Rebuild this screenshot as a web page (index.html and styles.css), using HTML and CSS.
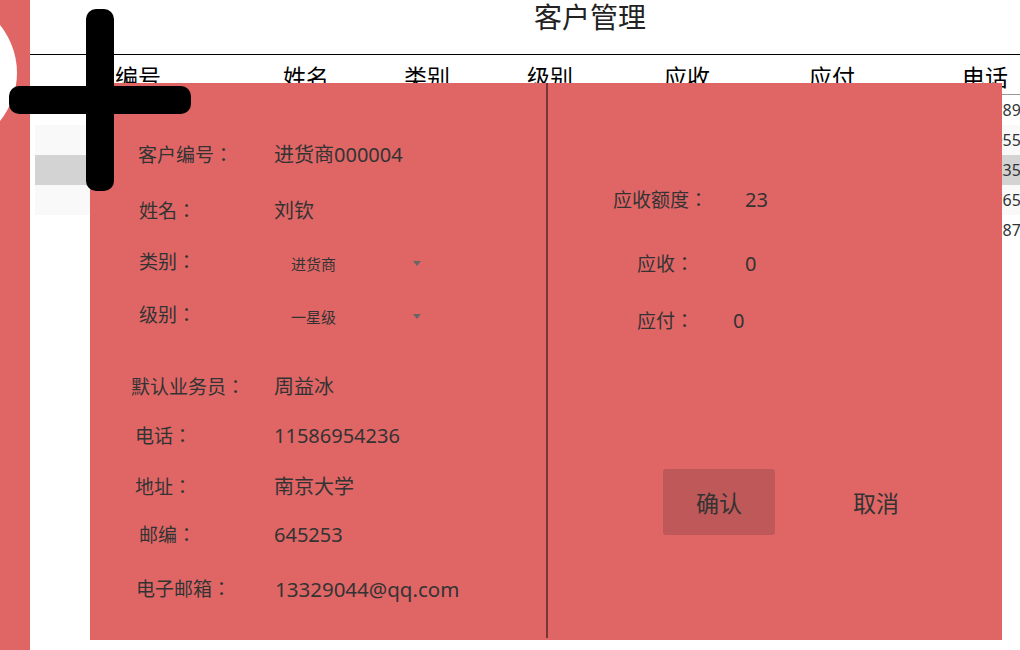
FILE: index.html
```html
<!DOCTYPE html>
<html lang="zh-CN">
<head>
<meta charset="utf-8">
<title>客户管理</title>
<link rel="stylesheet" href="styles.css">
</head>
<body>
<div class="page">
  <aside class="rail"></aside>
  <main class="main">
    <h1 class="title">客户管理</h1>
    <div class="table">
      <div class="thead">
        <span>编号</span><span>姓名</span><span>类别</span><span>级别</span><span>应收</span><span>应付</span><span>电话</span>
      </div>
      <div class="trow"><span>进货商000001</span><span>王明</span><span>进货商</span><span>一星级</span><span>0</span><span>0</span><span class="phone">13978912345</span></div>
      <div class="trow alt"><span>进货商000002</span><span>李华</span><span>销售商</span><span>二星级</span><span>0</span><span>0</span><span class="phone">13805566712</span></div>
      <div class="trow sel"><span>进货商000003</span><span>张伟</span><span>进货商</span><span>一星级</span><span>0</span><span>0</span><span class="phone">15923548801</span></div>
      <div class="trow alt"><span>进货商000004</span><span>刘钦</span><span>进货商</span><span>一星级</span><span>0</span><span>0</span><span class="phone">18676523019</span></div>
      <div class="trow"><span>进货商000005</span><span>陈静</span><span>销售商</span><span>三星级</span><span>0</span><span>0</span><span class="phone">13528744560</span></div>
    </div>
  </main>
</div>

<section class="modal">
  <div class="pane-left">
    <div class="form">
      <div class="field"><span class="lbl">客户编号：</span><span class="val">进货商000004</span></div>
      <div class="field"><span class="lbl nudge">姓名：</span><span class="val">刘钦</span></div>
      <div class="field"><span class="lbl nudge">类别：</span><div class="select"><span>进货商</span><i class="caret"></i></div></div>
      <div class="field"><span class="lbl nudge">级别：</span><div class="select"><span>一星级</span><i class="caret"></i></div></div>
      <div class="field"><span class="lbl wide">默认业务员：</span><span class="val">周益冰</span></div>
      <div class="field"><span class="lbl in">电话：</span><span class="val">11586954236</span></div>
      <div class="field"><span class="lbl in">地址：</span><span class="val">南京大学</span></div>
      <div class="field"><span class="lbl nudge">邮编：</span><span class="val">645253</span></div>
      <div class="field"><span class="lbl mail">电子邮箱：</span><span class="val email">13329044@qq.com</span></div>
    </div>
  </div>
  <div class="divider"></div>
  <div class="pane-right">
    <div class="stats">
      <div class="stat"><span class="slbl">应收额度：</span><span>23</span></div>
      <div class="stat short"><span class="slbl">应收：</span><span>0</span></div>
      <div class="stat short tight"><span class="slbl">应付：</span><span>0</span></div>
    </div>
    <div class="actions">
      <button class="btn primary" type="button">确认</button>
      <button class="btn" type="button">取消</button>
    </div>
  </div>
</section>

<svg class="cross" width="182" height="182" viewBox="0 0 182 182" aria-hidden="true">
  <rect x="77" y="0" width="28" height="182" rx="10" fill="#000"/>
  <rect x="0" y="77" width="182" height="28" rx="10" fill="#000"/>
</svg>
</body>
</html>
```

FILE: styles.css
```css
* { box-sizing: border-box; }

html, body {
  margin: 0;
  padding: 0;
  width: 1020px;
  height: 650px;
  overflow: hidden;
  background: #fff;
  font-family: "Noto Sans", "Noto Sans CJK SC", sans-serif;
  color: #333;
}

.page {
  display: flex;
  height: 650px;
}

.rail {
  position: relative;
  flex: 0 0 30px;
  background: #e06666;
  overflow: hidden;
}

.rail::before {
  content: "";
  position: absolute;
  left: -135px;
  top: -3px;
  width: 152px;
  height: 152px;
  border-radius: 50%;
  background: #fff;
}

.main {
  flex: 1;
  min-width: 0;
}

.title {
  margin: 0;
  height: 55px;
  padding-left: 504px;
  font-size: 28px;
  font-weight: normal;
  line-height: 34px;
  color: #222;
  border-bottom: 1px solid #000;
}

.table {
  margin-left: 5px;
}

.thead,
.trow {
  display: grid;
  grid-template-columns: 168px 121px 123px 137px 145px 153px 1fr;
  padding-left: 80px;
  white-space: nowrap;
}

.thead {
  height: 40px;
  border-bottom: 1px solid #999;
  font-size: 23px;
  line-height: 44px;
  color: #000;
}

.trow {
  height: 30px;
  font-size: 16px;
  line-height: 30px;
  color: #333;
}

.trow.alt { background: #f9f9f9; }
.trow.sel { background: #d3d3d3; }

.trow .phone { padding-left: 4px; }

.cross {
  position: absolute;
  left: 9px;
  top: 9px;
  z-index: 5;
}

.modal {
  position: absolute;
  left: 90px;
  top: 83px;
  width: 912px;
  height: 557px;
  background: #e06666;
  display: flex;
  z-index: 2;
}

.pane-left {
  flex: 0 0 456px;
}

.divider {
  flex: 0 0 2px;
  background: #7a3636;
  margin-bottom: 2px;
}

.pane-right {
  flex: 1;
  padding-top: 102px;
}

.form {
  display: grid;
  grid-template-rows: 56px 51px 53px 72px 49px 51px 48px 54px 30px;
  padding-top: 57px;
}

.field {
  display: grid;
  grid-template-columns: 185px 1fr;
  align-items: start;
  font-size: 19px;
  line-height: 30px;
  white-space: nowrap;
}

.lbl,
.slbl {
  font-family: "Noto Sans", "Noto Sans CJK TC", "Noto Sans CJK SC", sans-serif;
  font-feature-settings: "locl" 0;
}

.lbl { padding-left: 48px; }
.lbl.nudge { padding-left: 49px; }
.lbl.wide { padding-left: 41px; }
.lbl.in { padding-left: 45px; }
.lbl.mail { padding-left: 46px; }

.val { font-size: 20px; margin-left: -1px; }
.val.email { font-size: 20.5px; margin-left: 0; }

.select {
  display: flex;
  align-items: center;
  justify-content: space-between;
  width: 154px;
  height: 30px;
  padding: 3px 8px 0 16px;
  font-size: 15px;
}

.caret {
  display: block;
  width: 0;
  height: 0;
  border-left: 4px solid transparent;
  border-right: 4px solid transparent;
  border-top: 5px solid #666;
}

.stats {
  display: grid;
  grid-template-rows: 64px 57px 30px;
}

.stat {
  display: grid;
  grid-template-columns: 132px auto;
  padding-left: 65px;
  font-size: 19px;
  line-height: 30px;
  white-space: nowrap;
}

.stat span:last-child { font-size: 20px; }

.stat.short {
  padding-left: 89px;
  grid-template-columns: 108px auto;
}

.stat.short.tight {
  grid-template-columns: 96px auto;
}

.actions {
  display: flex;
  gap: 45px;
  margin-top: 133px;
  padding-left: 115px;
}

.btn {
  width: 112px;
  height: 66px;
  border: none;
  border-radius: 3px;
  background: transparent;
  font-family: "Noto Sans", "Noto Sans CJK SC", sans-serif;
  font-size: 23px;
  color: #333;
  padding: 0;
}

.btn.primary {
  background: #bf5858;
}
```
